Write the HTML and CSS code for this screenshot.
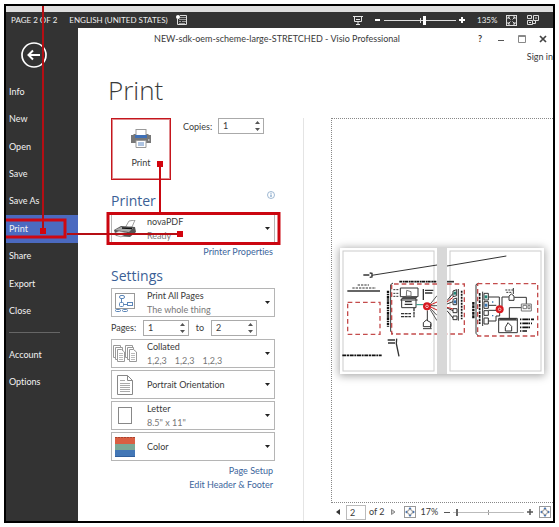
FILE: index.html
```html
<!DOCTYPE html>
<html lang="en">
<head>
<meta charset="utf-8">
<title>NEW-sdk-oem-scheme-large-STRETCHED - Visio Professional</title>
<link rel="stylesheet" href="styles.css">
</head>
<body>
<svg class="defs" width="0" height="0" aria-hidden="true">
  <symbol id="spin" viewBox="0 0 5 10"><path d="M0 3L2.500 0L5 3zM0 7L2.500 10L5 7z" fill="#555"/></symbol>
  <symbol id="caret" viewBox="0 0 5 3"><path d="M0 0H5L2.500 3z" fill="#222"/></symbol>
  <symbol id="fit" viewBox="0 0 12 12"><rect x=".5" y=".5" width="11" height="11" fill="#fff" stroke="#999"/><circle cx="6" cy="6" r="2.500" fill="#fff" stroke="#8a8a8a"/><path d="M6 1l1.500 2h-3zM6 11l1.500-2h-3zM1 6l2-1.500v3zM11 6l-2-1.500v3z" fill="#4472b0"/></symbol>
</svg>
<div class="frame">
  <header class="status">
    <span class="status-page">PAGE 2 OF 2</span>
    <span class="status-lang">ENGLISH (UNITED STATES)</span>
    <svg class="status-macro" viewBox="0 0 11 10" width="11" height="10"><path d="M4 .5H10.500V9.500H1.500V4" fill="none" stroke="#ddd"/><path d="M4 2.500H10M3 4.500H10M3 6.500H5M6 6.500H10M3 8.500H9" stroke="#999"/><circle cx="2" cy="2" r="2" fill="#fff"/></svg>
    <div class="zoom-tools">
      <svg class="show" viewBox="0 0 10 9" width="10" height="9"><path d="M0 .5H10M1.500 1V5.500H8.500V1M3 3.500H7M5 5.500V8.500M3 8.500H7" fill="none" stroke="#e6e6e6"/></svg>
      <button class="sign" aria-label="Zoom out"><svg viewBox="0 0 6 6" width="6" height="6"><path d="M0 3H5" stroke="#fff" stroke-width="2"/></svg></button>
      <input class="range range-dark" type="range" min="0" max="100" value="56" aria-label="Zoom">
      <button class="sign" aria-label="Zoom in"><svg viewBox="0 0 6 6" width="6" height="6"><path d="M0 3H6M3 0V6" stroke="#fff" stroke-width="2"/></svg></button>
      <span class="percent">135%</span>
      <svg class="fit-dark" viewBox="0 0 11 11" width="11" height="11"><rect x=".5" y=".5" width="10" height="10" fill="none" stroke="#ddd"/><path d="M2 4V2H4M7 2H9V4M9 7V9H7M4 9H2V7M2 2L4.500 4.500M9 2L6.500 4.500M9 9L6.500 6.500M2 9L4.500 6.500" fill="none" stroke="#ddd"/></svg>
      <svg viewBox="0 0 12 10" width="12" height="10"><path d="M.5 .5H4.500V3.500H.5zM6.500 .5H11.500V5.500H6.500zM.5 5.500H5.500V9.500H.5zM8 3H10M2 7.500H4M6 8.500H8.500V6" fill="none" stroke="#ddd"/></svg>
    </div>
  </header>
  <div class="body">
    <nav class="side">
      <button class="back" aria-label="Back"><svg viewBox="0 0 26 26" width="26" height="26"><circle cx="13" cy="13" r="12" fill="none" stroke="#fff" stroke-width="1.700"/><path d="M19 13H8M12 8.500L7.500 13L12 17.500" fill="none" stroke="#fff" stroke-width="2"/></svg></button>
      <div class="side-main">
        <a href="#info">Info</a><a href="#new">New</a><a href="#open">Open</a><a href="#save">Save</a><a href="#saveas">Save As</a><a href="#print" class="current">Print</a><a href="#share">Share</a><a href="#export">Export</a><a href="#close">Close</a>
      </div>
      <hr>
      <div class="side-more"><a href="#account">Account</a><a href="#options">Options</a></div>
    </nav>
    <main class="main">
      <div class="titlebar">
        <span class="title">NEW-sdk-oem-scheme-large-STRETCHED - Visio Professional</span>
        <div class="window">
          <button class="help" aria-label="Help">?</button>
          <button aria-label="Minimize"><svg viewBox="0 0 8 8" width="8" height="8"><path d="M1 5.500H7" stroke="#555"/></svg></button>
          <button aria-label="Maximize"><svg viewBox="0 0 8 8" width="8" height="8"><path d="M.5 .5H7.500V7.500H.5zM0 1.500H8" fill="none" stroke="#888"/></svg></button>
          <button aria-label="Close"><svg viewBox="0 0 8 8" width="8" height="8"><path d="M1 1L7 7M7 1L1 7" stroke="#444" stroke-width="1.700"/></svg></button>
        </div>
      </div>
      <a class="signin" href="#signin">Sign in</a>
      <h1>Print</h1>
      <div class="columns">
        <form class="settings">
          <div class="top-row">
            <button type="button" class="print">
              <svg viewBox="0 0 20 19" width="20" height="19"><path d="M0 6H2L3 5H17L18 6H20V14H0z" fill="#777"/><rect x="5" y=".5" width="10" height="7" fill="#fff" stroke="#999"/><path d="M4 6H16V9H4z" fill="#3f6fb5"/><path d="M5 11.500H15V18.500H5z" fill="#fff" stroke="#999"/><path d="M7 14H13M7 16H13" stroke="#5c88c4"/><path d="M17 11h1.500" stroke="#fff"/></svg>
              <span>Print</span>
            </button>
            <label for="copies">Copies:</label>
            <span class="number"><input id="copies" type="number" value="1"><svg width="5" height="10"><use href="#spin"/></svg></span>
          </div>
          <div class="heading"><h2>Printer</h2><svg viewBox="0 0 8 8" width="8" height="8"><circle cx="4" cy="4" r="3.500" fill="#fff" stroke="#87a6c6" stroke-width=".8"/><path d="M4 3.500V6M4 1.800V2.700" stroke="#5d89b8"/></svg></div>
          <div class="picker">
            <svg viewBox="0 0 24 18" width="24" height="18"><path d="M12 8L16 1L22 0L19 7z" fill="#fff" stroke="#777" stroke-width=".7"/><path d="M1 10L8 6L22 7L23 12L17 17L3 16z" fill="#555"/><path d="M2 10L8 7L20 8L16 12z" fill="#aaa"/><path d="M9 8L19 8.500" stroke="#111" stroke-width="1.500"/><path d="M0 14L6 11L14 13L8 17z" fill="#eee" stroke="#888" stroke-width=".6"/></svg>
            <div class="choice"><select aria-label="Printer"><option>novaPDF</option></select><small>Ready</small></div>
            <svg class="caret" width="5" height="3"><use href="#caret"/></svg>
          </div>
          <a class="link" href="#properties">Printer Properties</a>
          <div class="heading"><h2>Settings</h2></div>
          <div class="stack">
          <div class="picker">
            <svg viewBox="0 0 22 20" width="22" height="20"><rect x="1.500" y=".5" width="19" height="15" fill="#fff" stroke="#999"/><g fill="#fff" stroke="#5c86b8"><rect x="5.500" y="2.500" width="5" height="3" rx="1.500"/><rect x="5.500" y="9.500" width="4" height="4" rx="1"/><rect x="13.500" y="9.500" width="5" height="3"/><path d="M7.500 6V9M10 11.500H13"/><rect x="1.500" y="16.500" width="5" height="2" rx="1"/><rect x="8.500" y="16.500" width="5" height="2" rx="1"/></g></svg>
            <div class="choice"><select aria-label="Pages to print"><option>Print All Pages</option></select><small>The whole thing</small></div>
            <svg class="caret" width="5" height="3"><use href="#caret"/></svg>
          </div>
          <div class="pages">
            <label for="from">Pages:</label>
            <span class="number"><input id="from" type="number" value="1"><svg width="5" height="10"><use href="#spin"/></svg></span>
            <label for="to">to</label>
            <span class="number"><input id="to" type="number" value="2"><svg width="5" height="10"><use href="#spin"/></svg></span>
          </div>
          <div class="picker">
            <svg viewBox="0 0 24 17" width="24" height="17"><g fill="#fff" stroke="#999"><path d="M.5 .5H7.500V12.500H.5z"/><path d="M2.500 2.500H9.500V14.500H2.500z"/><path d="M4.500 4.500H8.500L11.500 7V16.500H4.500z"/><path d="M12.500 .5H19.500V12.500H12.500z"/><path d="M14.500 2.500H20.500V14.500H14.500z"/><path d="M16.500 4.500H20.500L23.500 7V16.500H16.500z"/><path d="M6 8.500H10M6 10.500H10M6 12.500H10M6 14.500H10M18 8.500H22M18 10.500H22M18 12.500H22M18 14.500H22" stroke="#bbb"/></g></svg>
            <div class="choice"><select aria-label="Collation"><option>Collated</option></select><small class="sets"><span>1,2,3</span><span>1,2,3</span><span>1,2,3</span></small></div>
            <svg class="caret" width="5" height="3"><use href="#caret"/></svg>
          </div>
          <div class="picker">
            <svg viewBox="0 0 16 20" width="16" height="20"><path d="M.5 .5H10.500L15.500 5.500V19.500H.5zM10.500 .5V5.500H15.500" fill="#fff" stroke="#888"/><path d="M3 5.500H8M3 8.500H13M3 10.500H13M3 12.500H13M3 14.500H13M3 16.500H13" stroke="#aaa"/></svg>
            <div class="choice"><select aria-label="Orientation"><option>Portrait Orientation</option></select></div>
            <svg class="caret" width="5" height="3"><use href="#caret"/></svg>
          </div>
          <div class="picker">
            <svg viewBox="0 0 14 17" width="14" height="17"><rect x=".5" y=".5" width="13" height="16" fill="#fff" stroke="#888"/></svg>
            <div class="choice"><select aria-label="Paper size"><option>Letter</option></select><small>8.5" x 11"</small></div>
            <svg class="caret" width="5" height="3"><use href="#caret"/></svg>
          </div>
          <div class="picker">
            <svg viewBox="0 0 20 20" width="20" height="20"><path d="M0 0H20V7H0z" fill="#d95f43"/><path d="M0 7H20V13H0z" fill="#7aa896"/><path d="M0 13H20V20H0z" fill="#4377b6"/><path d="M0 .5H20" stroke="#a94430" stroke-dasharray="2 1"/><path d="M0 19.500H20" stroke="#315f9c"/></svg>
            <div class="choice"><select aria-label="Color mode"><option>Color</option></select></div>
            <svg class="caret" width="5" height="3"><use href="#caret"/></svg>
          </div>
          </div>
          <a class="link" href="#setup">Page Setup</a>
          <a class="link" href="#footer">Edit Header &amp; Footer</a>
        </form>
        <section class="preview">
          <div class="canvas">
            <div class="sheets">
            <svg class="sheet" viewBox="45 22 291 378">
              <rect x="54" y="31" width="273" height="360" fill="none" stroke="#ccc" stroke-width="3"/>
              <g fill="none" stroke="#333" stroke-width="3">
                <path d="M140 104L336 73"/><path d="M115 103H133M134 97L141 98V109L134 110" stroke-width="4"/>
                <path d="M67 151H165" stroke-width="4"/><path d="M98 133H132M82 142H153" stroke-dasharray="7 3"/>
                <path d="M223 123H336" stroke="#111" stroke-width="5" stroke-dasharray="9 2 5 1"/>
                <path d="M189 150V258" stroke="#111" stroke-width="7" stroke-dasharray="8 2 4 2"/>
                <path d="M204 127L197 132V272L204 280"/>
                <path d="M226 142H279V168H226zM230 174H273V201H230zM232 171H276M226 178H278" /><path d="M245 149L258 153V166H244z" stroke="#777"/><path d="M239 191H262M240 183H260" stroke-width="4"/>
                <path d="M205 147H222M205 158H222M205 167H222" stroke-dasharray="6 3"/>
                <path d="M267 202V230M228 219H258M228 228H258" stroke-width="4" stroke-dasharray="9 2"/><path d="M295 145V178M300 149H325M300 157H322" stroke-width="4"/>
                <path d="M274 192H296" stroke="#21927b"/>
                <path d="M307 209V241M295 246L304 238L318 246V258H295zM294 264H320M317 249V262"/>
                <path d="M316 190L336 165M317 195H336M316 203L336 224M315 206L336 240" stroke="#555"/><path d="M316 193L336 184M317 199L336 208" stroke="#c22"/>
                <path d="M188 298H210M189 307H210M215 294L214 309L222 347" stroke-width="4"/>
                <path d="M52 344H170" stroke="#111" stroke-width="5" stroke-dasharray="12 2 6 2"/>
              </g>
              <g fill="none" stroke="#c44c4c" stroke-width="4" stroke-dasharray="14 9"><path d="M68 185H165V281H68z"/><path d="M336 130H200V280H336"/></g>
              <circle cx="306" cy="197" r="12" fill="#d71920"/><circle cx="306" cy="197" r="4" fill="none" stroke="#fff" stroke-width="2"/>
            </svg>
            <svg class="sheet" viewBox="36 22 291 378">
              <rect x="45" y="31" width="273" height="360" fill="none" stroke="#ccc" stroke-width="3"/>
              <g fill="none" stroke="#333" stroke-width="3">
                <path d="M36 76L214 46"/><path d="M36 123H57" stroke-width="5"/>
                <path d="M70 145V240M54 151L65 147V165L54 168zM54 176L65 172V192H54zM54 204H66V216H54zM54 226H66V237H54z"/><path d="M80 150V236" stroke="#111" stroke-width="5" stroke-dasharray="6 3"/>
                <path d="M36 180L54 158M36 190L54 183M36 202L54 210M36 210L54 232"/><path d="M36 184L54 170M36 200L54 205" stroke="#c22"/>
                <path d="M115 184V235" stroke="#111" stroke-width="7" stroke-dasharray="8 2"/><path d="M130 127L123 132V278L130 286"/><path d="M134 157V250" stroke="#111" stroke-width="5" stroke-dasharray="8 3"/>
                <path d="M143 153V256M147 158H160V178H147zM147 183H160V203H147zM147 210H160V224H147zM147 232H160V250H147z"/>
                <path d="M160 169H193V196M160 194H184M160 209H184M160 241H183V226H194V216M201 196V169H221M238 170H274V190M259 201H223V233"/>
                <path d="M222 166L229 160L237 166V179H222zM235 142V160"/><path d="M211 148H234M214 155H230" stroke-dasharray="6 3"/>
                <path d="M259 190H289V211H259zM264 194H275V204H264zM279 194H285V204H279z" stroke="#777"/>
                <path d="M191 233H247V276H191zM191 238H247M211 260L219 246L230 257V271H211z"/><path d="M194 235H244" stroke-width="5"/>
                <path d="M255 236H297M255 248H291M255 260H286M255 271H276" stroke="#111" stroke-width="5" stroke-dasharray="4 3 18 1"/>
              </g>
              <g fill="#278678"><rect x="56" y="153" width="7" height="9"/><rect x="149" y="164" width="8" height="9"/></g><g fill="#3975b0"><rect x="56" y="179" width="7" height="9"/><rect x="149" y="189" width="8" height="9"/><path d="M171 182h4v4h-4zM171 223h4v4h-4z"/></g>
              <g fill="none" stroke="#c44c4c" stroke-width="4" stroke-dasharray="14 9"><path d="M36 130H88V280H36"/><path d="M128 129H308V286H128z"/></g>
              <circle cx="194" cy="206" r="12" fill="#d71920"/><circle cx="194" cy="206" r="4" fill="none" stroke="#fff" stroke-width="2"/>
            </svg>
            </div>
          </div>
          <div class="pager">
            <button aria-label="Previous page"><svg viewBox="0 0 4 6" width="4" height="6"><path d="M4 0V6L0 3z" fill="#333"/></svg></button>
            <input class="page-no" type="text" value="2" aria-label="Current page">
            <span>of 2</span>
            <button class="next" aria-label="Next page"><svg viewBox="0 0 5 6" width="5" height="6"><path d="M.5 .5V5.500L4 3z" fill="#ccc" stroke="#888"/></svg></button>
            <svg width="12" height="12"><use href="#fit"/></svg>
            <span class="small-percent">17%</span>
            <button class="sign" aria-label="Zoom preview out"><svg viewBox="0 0 6 6" width="6" height="6"><path d="M0 3.500H6" stroke="#555"/></svg></button>
            <input class="range range-light" type="range" min="0" max="100" value="4" aria-label="Preview zoom">
            <button class="sign" aria-label="Zoom preview in"><svg viewBox="0 0 6 6" width="6" height="6"><path d="M0 3H6M3 0V6" stroke="#555" stroke-width="1.500"/></svg></button>
            <svg width="12" height="12"><use href="#fit"/></svg>
          </div>
        </section>
      </div>
    </main>
  </div>
  <svg class="callouts" viewBox="6 6 280 246" width="280" height="246" aria-hidden="true">
    <g fill="none" stroke="#b50e14" stroke-width="2"><path d="M43 6V231M67 234H180"/></g>
    <path d="M160 164V213" stroke="#c90811" stroke-width="2"/>
    <path d="M6 220H65V237H6" fill="none" stroke="#cf0812" stroke-width="3"/>
    <rect x="108" y="213.500" width="171" height="30" fill="none" stroke="#cb0610" stroke-width="3"/>
    <path d="M40 228h6v6h-6zM177 231h6v6h-6zM157 161h6v6h-6z" fill="#d2040e"/>
  </svg>
</div>
</body>
</html>
```
FILE: styles.css
```css
* { box-sizing: border-box; }
body { margin: 0; padding: 4px; background: #fff; color: #3a3a3a; font: 9px/14px Lato, "Open Sans", sans-serif; font-variant-ligatures: none; }
button, input, select { font: inherit; font-variant-ligatures: none; color: inherit; margin: 0; padding: 0; border: 0; background: none; }
button { display: flex; align-items: center; justify-content: center; }
a { color: inherit; text-decoration: none; }
h1, h2 { margin: 0; font-weight: 400; }
svg { display: block; flex: none; }
.defs { position: absolute; }
.frame { position: relative; display: flex; flex-direction: column; min-height: calc(100vh - 8px); border: 2px solid #000; background: #fff; overflow: hidden; }
.status { display: flex; align-items: center; height: 22px; padding: 0 14px 0 5px; border-top: 6px solid #dedede; background: #333; color: #eee; font-size: 8px; }
.status-lang { margin-left: 12px; }
.status-macro { margin-left: 8px; }
.zoom-tools { display: flex; align-items: center; margin-left: auto; }
.show { margin-right: 12px; }
.sign { width: 6px; height: 12px; }
.percent { margin-left: 12px; width: 29px; }
.fit-dark { margin-right: 10px; }
.range { appearance: none; width: 72px; height: 12px; margin: 0 3px; }
.range-dark { background: linear-gradient(#ddd, #ddd) center / 100% 1px no-repeat, linear-gradient(#ddd, #ddd) center / 1px 5px no-repeat; }
.range-light { background: linear-gradient(#bbb, #bbb) center / 100% 1px no-repeat, linear-gradient(#999, #999) center / 1px 5px no-repeat; }
.range::-webkit-slider-thumb { appearance: none; width: 3px; height: 9px; background: #fff; }
.range-light::-webkit-slider-thumb { width: 2px; height: 7px; background: #666; }
.body { display: flex; flex: 1; }
.side { width: 72px; flex: none; background: #333; color: #f2f2f2; }
.back { margin: 14px 0 10px 15px; }
.side-main { display: grid; grid-auto-rows: 1fr; height: 247px; }
.side a { display: flex; align-items: center; padding-left: 3px; }
.side .current { background: #4b6ac0; }
.side hr { width: 51px; margin: 7px 0 8px 3px; border: 0; border-top: 1px solid #666; }
.side-more a { height: 27px; }
.main { flex: 1; min-width: 0; display: flex; flex-direction: column; }
.titlebar { display: flex; align-items: center; height: 22px; }
.title { flex: 1; text-align: center; }
.window { display: flex; gap: 13px; padding-right: 6px; }
.window button { width: 8px; height: 12px; }
.help { font-weight: 700; }
.signin { align-self: flex-end; }
h1 { margin-left: 30px; height: 54px; font: 300 26px/52px "Open Sans", sans-serif; }
.columns { display: flex; flex: 1; }
.settings { width: 226px; flex: none; padding: 0 28px 0 33px; border-right: 1px solid #e4e4e4; display: flex; flex-direction: column; }
.top-row { display: flex; align-items: flex-start; }
.top-row label { margin: 2px 8px 0 12px; width: 27px; }
.print { width: 60px; height: 62px; flex: none; flex-direction: column; gap: 8px; border: 1px solid #c5161d; box-shadow: inset 0 0 0 1px #e08a8d; }
.number { display: flex; align-items: center; width: 46px; height: 16px; padding: 0 3px 0 4px; border: 1px solid #aaa; background: #fff; }
.number input { flex: 1; min-width: 0; appearance: textfield; }
.number input::-webkit-inner-spin-button { appearance: none; }
.heading { display: flex; justify-content: space-between; height: 34px; }
.heading svg { margin-top: 11px; }
h2 { color: #3b5f96; font: 400 14px/42px "Open Sans", sans-serif; }
.picker { display: flex; align-items: center; height: 29px; border: 1px solid #b5b5b5; padding-right: 4px; }
.picker > svg:first-child { width: 24px; margin: 0 10px 0 1px; }
.choice { flex: 1; min-width: 0; display: flex; flex-direction: column; }
.choice select { appearance: none; width: 100%; height: 14px; }
small { font-size: 9px; color: #777; }
.sets { display: flex; gap: 8px; }
.link { align-self: flex-end; margin-right: 2px; color: #3c659c; }
.settings > .picker { margin-bottom: 2px; }
.link + .heading { height: 29px; }
.link + .heading h2 { line-height: 34px; }
.stack { display: flex; flex-direction: column; gap: 2px; margin-bottom: 3px; }
.pages { display: flex; align-items: center; height: 18px; }
.pages label:first-child { width: 32px; }
.pages label:nth-of-type(2) { width: 22px; text-align: center; }
.preview { flex: 1; min-width: 0; margin-left: 27px; display: flex; flex-direction: column; }
.canvas { flex: 1; display: flex; align-items: center; justify-content: center; padding-right: 2px; border: 1px dotted #888; border-right: 0; }
.sheets { display: flex; gap: 10px; background: #d8d8d8; box-shadow: 0 1px 8px 1px #aaa; }
.sheet { width: 97px; height: 126px; background: #fff; }
.pager { display: flex; align-items: center; height: 18px; padding: 0 2px 0 5px; }
.page-no { width: 20px; height: 15px; margin: 0 3px 0 6px; padding-left: 3px; border: 1px solid #bbb; }
.next { margin: 0 8px 0 6px; }
.small-percent { margin: 0 6px 0 5px; }
.pager .range { flex: 1; min-width: 0; }
.pager > svg:last-child { margin-left: 6px; }
.callouts { position: absolute; left: 0; top: 0; pointer-events: none; }
```
